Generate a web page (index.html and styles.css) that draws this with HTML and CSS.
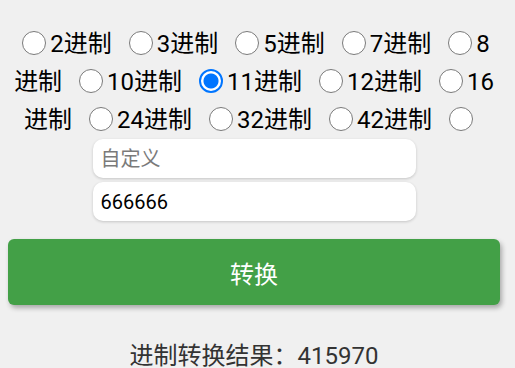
FILE: index.html
```html
<!DOCTYPE html>
<html lang="zh">
<head>
<meta charset="utf-8">
<link rel="stylesheet" href="styles.css">
</head>
<body>
<div class="page">
  <div class="radios">
    <label class="opt"><input type="radio" name="base" class="radio">2进制</label>
    <label class="opt"><input type="radio" name="base" class="radio">3进制</label>
    <label class="opt"><input type="radio" name="base" class="radio">5进制</label>
    <label class="opt"><input type="radio" name="base" class="radio">7进制</label>
    <label class="opt"><input type="radio" name="base" class="radio">8进制</label>
    <label class="opt"><input type="radio" name="base" class="radio">10进制</label>
    <label class="opt"><input type="radio" name="base" class="radio" checked>11进制</label>
    <label class="opt"><input type="radio" name="base" class="radio">12进制</label>
    <label class="opt"><input type="radio" name="base" class="radio">16进制</label>
    <label class="opt"><input type="radio" name="base" class="radio">24进制</label>
    <label class="opt"><input type="radio" name="base" class="radio">32进制</label>
    <label class="opt"><input type="radio" name="base" class="radio">42进制</label>
    <label class="opt"><input type="radio" name="base" class="radio"></label>
  </div>
  <div class="fields">
    <input class="field" type="text" placeholder="自定义">
    <input class="field" type="text" value="666666">
  </div>
  <button class="convert" type="button">转换</button>
  <p class="result">进制转换结果：415970</p>
</div>
</body>
</html>
```
FILE: styles.css
```css
html, body {
  margin: 0;
  padding: 0;
  background: #f0f0f0;
}
body {
  font-family: Roboto, "Noto Sans CJK SC", sans-serif;
  color: #000;
}
.page {
  padding: 25px 15px 0 8px;
}
.radios {
  text-align: center;
  font-size: 24px;
  line-height: 38px;
}
.opt {
  margin-right: 7px;
}
.radio {
  appearance: none;
  -webkit-appearance: none;
  width: 24px;
  height: 24px;
  margin: 0 4px;
  border: 1.5px solid #7a7a7a;
  border-radius: 50%;
  background: #fff;
  vertical-align: -3px;
  box-sizing: border-box;
}
.radio:checked {
  border: 2px solid #0075ff;
  background: radial-gradient(circle, #0075ff 0 7px, #fff 8px);
}
.fields {
  display: flex;
  flex-direction: column;
  align-items: center;
  gap: 4px;
}
.field {
  width: 323px;
  height: 39px;
  box-sizing: border-box;
  border: none;
  border-radius: 10px;
  background: #fff;
  box-shadow: 0 1px 3px rgba(0, 0, 0, 0.18);
  padding: 0 8px;
  font-family: Roboto, "Noto Sans CJK SC", sans-serif;
  font-size: 20px;
  color: #000;
  outline: none;
}
.field::placeholder {
  color: #7a7a7a;
}
.convert {
  display: block;
  width: 492px;
  height: 66px;
  margin: 18px 0 0 0;
  border: none;
  border-radius: 6px;
  background: #43a047;
  color: #fff;
  font-family: Roboto, "Noto Sans CJK SC", sans-serif;
  font-size: 24px;
  box-shadow: 2px 3px 5px rgba(0, 0, 0, 0.3);
}
.result {
  margin: 32px 0 0 0;
  text-align: center;
  font-size: 24px;
  line-height: 38px;
  color: #333;
}
```
